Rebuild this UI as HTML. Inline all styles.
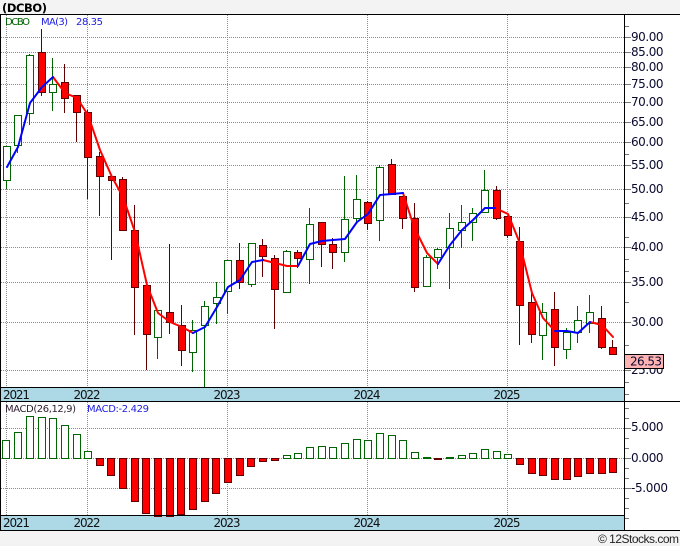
<!DOCTYPE html>
<html><head><meta charset="utf-8"><style>
html,body{margin:0;padding:0;background:#f3f3f3;width:680px;height:546px;overflow:hidden}
svg{display:block}
text{font-family:"DejaVu Sans",sans-serif}
</style></head><body>
<svg width="680" height="546" viewBox="0 0 680 546" xmlns="http://www.w3.org/2000/svg">
<rect width="680" height="546" fill="#f3f3f3"/>
<rect x="0" y="14" width="680" height="516" fill="#fff"/>
<rect x="1" y="387" width="624" height="14" fill="#add8e6"/>
<rect x="1" y="516" width="624" height="14" fill="#add8e6"/>

<g shape-rendering="crispEdges" fill="none">
<path stroke="#8c8c8c" stroke-dasharray="1 1" d="M1 37.5H625M1 52.5H625M1 67.5H625M1 84.5H625M1 102.5H625M1 122.5H625M1 142.5H625M1 165.5H625M1 189.5H625M1 217.5H625M1 247.5H625M1 282.5H625M1 322.5H625M1 370.5H625M1 428.5H625M1 458.5H625M1 488.5H625M6.5 15V387M87.5 15V387M227.5 15V387M367.5 15V387M507.5 15V387M6.5 402V516M87.5 402V516M227.5 402V516M367.5 402V516M507.5 402V516"/>
<path stroke="#777" d="M625 37.5H631M625 52.5H631M625 67.5H631M625 84.5H631M625 102.5H631M625 122.5H631M625 142.5H631M625 165.5H631M625 189.5H631M625 217.5H631M625 247.5H631M625 282.5H631M625 322.5H631M625 370.5H631M625 428.5H631M625 458.5H631M625 488.5H631"/>
<path stroke="#777" d="M625 26.5H629M625 154.5H629M625 203.5H629M625 237.5H629M625 259.5H629M625 271.5H629M625 302.5H629M625 345.5H629M625 382.5H629M625 394.5H629M625 408.5H629M625 418.5H629M625 438.5H629M625 448.5H629M625 468.5H629M625 478.5H629M625 498.5H629M625 508.5H629M625 518.5H629"/>

<path stroke="#006400" d="M6.5 146V189M17.5 115V153M29.5 54V125M52.5 58V111M157.5 310V359M192.5 320V372M204.5 301V387M216.5 282V324M227.5 260V314M251.5 243V287M286.5 250V292M309.5 208V284M344.5 176V262M356.5 175V223M379.5 165V241M426.5 255V286M437.5 248V269M449.5 213V289M461.5 205V248M472.5 208V241M484.5 170V212M542.5 303V360M566.5 328V359M577.5 306V343M589.5 295V333"/>
<path stroke="#600000" d="M41.5 29V96M64.5 64V113M76.5 95V142M87.5 110V199M99.5 152V216M111.5 176V260M122.5 177V230M134.5 205V335M146.5 285V370M169.5 244V334M181.5 305V366M239.5 243V289M262.5 239V277M274.5 255V329M297.5 250V268M321.5 222V267M332.5 238V269M367.5 201V230M391.5 159V194M402.5 196V229M414.5 203V292M496.5 186V220M507.5 216V238M519.5 227V345M531.5 290V343M554.5 292V366M601.5 306V349M612.5 340V354"/>

<g fill="#fff" stroke="#006400">
<rect x="3.5" y="146.5" width="7" height="34"/>
<rect x="14.5" y="115.5" width="7" height="30"/>
<rect x="26.5" y="55.5" width="7" height="58"/>
<rect x="49.5" y="84.5" width="7" height="8"/>
<rect x="154.5" y="310.5" width="7" height="27"/>
<rect x="189.5" y="330.5" width="7" height="22"/>
<rect x="201.5" y="306.5" width="7" height="19"/>
<rect x="213.5" y="297.5" width="7" height="6"/>
<rect x="224.5" y="260.5" width="7" height="31"/>
<rect x="248.5" y="243.5" width="7" height="41"/>
<rect x="283.5" y="251.5" width="7" height="41"/>
<rect x="306.5" y="224.5" width="7" height="35"/>
<rect x="341.5" y="219.5" width="7" height="33"/>
<rect x="353.5" y="199.5" width="7" height="19"/>
<rect x="376.5" y="167.5" width="7" height="53"/>
<rect x="423.5" y="257.5" width="7" height="29"/>
<rect x="434.5" y="249.5" width="7" height="8"/>
<rect x="446.5" y="228.5" width="7" height="19"/>
<rect x="458.5" y="222.5" width="7" height="8"/>
<rect x="469.5" y="213.5" width="7" height="9"/>
<rect x="481.5" y="190.5" width="7" height="22"/>
<rect x="539.5" y="312.5" width="7" height="23"/>
<rect x="563.5" y="332.5" width="7" height="17"/>
<rect x="574.5" y="320.5" width="7" height="12"/>
<rect x="586.5" y="312.5" width="7" height="11"/>
</g>
<g fill="#f00" stroke="#600000">
<rect x="38.5" y="52.5" width="7" height="40"/>
<rect x="61.5" y="82.5" width="7" height="16"/>
<rect x="73.5" y="95.5" width="7" height="17"/>
<rect x="84.5" y="112.5" width="7" height="45"/>
<rect x="96.5" y="156.5" width="7" height="20"/>
<rect x="108.5" y="176.5" width="7" height="4"/>
<rect x="119.5" y="179.5" width="7" height="51"/>
<rect x="131.5" y="230.5" width="7" height="57"/>
<rect x="143.5" y="285.5" width="7" height="49"/>
<rect x="166.5" y="312.5" width="7" height="10"/>
<rect x="178.5" y="325.5" width="7" height="25"/>
<rect x="236.5" y="260.5" width="7" height="22"/>
<rect x="259.5" y="245.5" width="7" height="11"/>
<rect x="271.5" y="258.5" width="7" height="31"/>
<rect x="294.5" y="252.5" width="7" height="6"/>
<rect x="318.5" y="222.5" width="7" height="22"/>
<rect x="329.5" y="244.5" width="7" height="8"/>
<rect x="364.5" y="202.5" width="7" height="21"/>
<rect x="388.5" y="164.5" width="7" height="30"/>
<rect x="399.5" y="196.5" width="7" height="22"/>
<rect x="411.5" y="218.5" width="7" height="69"/>
<rect x="493.5" y="190.5" width="7" height="28"/>
<rect x="504.5" y="216.5" width="7" height="19"/>
<rect x="516.5" y="241.5" width="7" height="64"/>
<rect x="528.5" y="302.5" width="7" height="32"/>
<rect x="551.5" y="309.5" width="7" height="38"/>
<rect x="598.5" y="318.5" width="7" height="29"/>
<rect x="609.5" y="347.5" width="7" height="7"/>
</g>

<g fill="#fff" stroke="#006400">
<rect x="2.5" y="440.5" width="7" height="18"/>
<rect x="14.5" y="432.5" width="7" height="26"/>
<rect x="26.5" y="416.5" width="7" height="42"/>
<rect x="38.5" y="417.5" width="7" height="41"/>
<rect x="49.5" y="418.5" width="7" height="40"/>
<rect x="61.5" y="425.5" width="7" height="33"/>
<rect x="73.5" y="434.5" width="7" height="24"/>
<rect x="84.5" y="451.5" width="7" height="7"/>
<rect x="283.5" y="455.5" width="7" height="3"/>
<rect x="294.5" y="453.5" width="7" height="5"/>
<rect x="306.5" y="447.5" width="7" height="11"/>
<rect x="318.5" y="446.5" width="7" height="12"/>
<rect x="329.5" y="447.5" width="7" height="11"/>
<rect x="341.5" y="443.5" width="7" height="15"/>
<rect x="353.5" y="439.5" width="7" height="19"/>
<rect x="364.5" y="440.5" width="7" height="18"/>
<rect x="376.5" y="433.5" width="7" height="25"/>
<rect x="388.5" y="435.5" width="7" height="23"/>
<rect x="399.5" y="440.5" width="7" height="18"/>
<rect x="411.5" y="452.5" width="7" height="6"/>
<rect x="423.5" y="457.5" width="7" height="1"/>
<rect x="446.5" y="457.5" width="7" height="1"/>
<rect x="458.5" y="455.5" width="7" height="3"/>
<rect x="469.5" y="453.5" width="7" height="5"/>
<rect x="481.5" y="449.5" width="7" height="9"/>
<rect x="493.5" y="451.5" width="7" height="7"/>
<rect x="504.5" y="454.5" width="7" height="4"/>
</g>
<g fill="#f00" stroke="#600000">
<rect x="96.5" y="458.5" width="7" height="7"/>
<rect x="107.5" y="458.5" width="7" height="17"/>
<rect x="119.5" y="458.5" width="7" height="30"/>
<rect x="131.5" y="458.5" width="7" height="43"/>
<rect x="142.5" y="458.5" width="7" height="55"/>
<rect x="154.5" y="458.5" width="7" height="58"/>
<rect x="166.5" y="458.5" width="7" height="58"/>
<rect x="177.5" y="458.5" width="7" height="56"/>
<rect x="189.5" y="458.5" width="7" height="51"/>
<rect x="201.5" y="458.5" width="7" height="43"/>
<rect x="212.5" y="458.5" width="7" height="35"/>
<rect x="224.5" y="458.5" width="7" height="24"/>
<rect x="236.5" y="458.5" width="7" height="17"/>
<rect x="247.5" y="458.5" width="7" height="8"/>
<rect x="259.5" y="458.5" width="7" height="3"/>
<rect x="271.5" y="458.5" width="7" height="2"/>
<rect x="434.5" y="458.5" width="7" height="1"/>
<rect x="516.5" y="458.5" width="7" height="6"/>
<rect x="528.5" y="458.5" width="7" height="15"/>
<rect x="539.5" y="458.5" width="7" height="17"/>
<rect x="551.5" y="458.5" width="7" height="21"/>
<rect x="563.5" y="458.5" width="7" height="21"/>
<rect x="574.5" y="458.5" width="7" height="18"/>
<rect x="586.5" y="458.5" width="7" height="15"/>
<rect x="598.5" y="458.5" width="7" height="15"/>
<rect x="609.5" y="458.5" width="7" height="14"/>
</g>
</g>

<g fill="none" stroke-width="2" stroke-linejoin="round" stroke-linecap="round">
<path stroke="#f00" d="M53 77L65 93L77 98L88 115L100 150L112 177L123 197L135 232L147 285L158 313L170 322L182 327L193 333M263 260L275 263L287 266L298 266M403 193L414 227L427 253L438 264M495 208L508 214L519 241L532 293L543 318L555 331M590 322L602 325L613 337"/>
<path stroke="#00f" d="M7 167L18 147L30 103L42 87L53 77M193 333L205 327L217 307L228 287L240 280L252 262L263 260M298 266L310 244L322 241L333 240L345 239L357 222L368 214L380 195L392 194L403 193M438 264L450 245L462 230L473 220L485 208L495 208M555 331L567 331L578 333L590 322"/>
</g>

<g shape-rendering="crispEdges" fill="none" stroke="#000">
<path d="M0 14.5H680M0 387.5H625M0 401.5H680M0 515.5H625M0 530.5H680M0.5 14V531M624.5 14V531"/>
</g>

<text x="2" y="12" font-weight="bold" font-size="11.5" textLength="45" fill="#000">(DCBO)</text>
<text x="5" y="25" font-size="10" textLength="25" fill="#006400">DCBO</text>
<text x="41" y="25" font-size="10" textLength="27" fill="#2020e0">MA(3)</text>
<text x="76" y="25" font-size="10" textLength="27" fill="#2020e0">28.35</text>
<text x="5" y="412" font-size="10" textLength="71" fill="#302030">MACD(26,12,9)</text>
<text x="87" y="412" font-size="10" textLength="62" fill="#2020e0">MACD:-2.429</text>

<g font-size="12" fill="#0a0a30">
<text x="631" y="41" textLength="32.5">90.00</text>
<text x="631" y="56" textLength="32.5">85.00</text>
<text x="631" y="71" textLength="32.5">80.00</text>
<text x="631" y="88" textLength="32.5">75.00</text>
<text x="631" y="106" textLength="32.5">70.00</text>
<text x="631" y="126" textLength="32.5">65.00</text>
<text x="631" y="146" textLength="32.5">60.00</text>
<text x="631" y="169" textLength="32.5">55.00</text>
<text x="631" y="193" textLength="32.5">50.00</text>
<text x="631" y="221" textLength="32.5">45.00</text>
<text x="631" y="251" textLength="32.5">40.00</text>
<text x="631" y="286" textLength="32.5">35.00</text>
<text x="631" y="326" textLength="32.5">30.00</text>
<text x="631" y="374" textLength="32.5">25.00</text>
<text x="631" y="431" textLength="32.5">5.000</text>
<text x="631" y="462" textLength="32.5">0.000</text>
<text x="631" y="492" textLength="37">-5.000</text>
</g>
<g shape-rendering="crispEdges"><rect x="624.5" y="354.5" width="39" height="14" fill="#ffb4b4" stroke="#000"/></g>
<text x="630" y="365.5" font-size="12" textLength="32" fill="#0a0a30">26.53</text>

<g font-size="12" fill="#111">
<text x="3" y="399" textLength="27">2021</text>
<text x="73.5" y="399" textLength="27">2022</text>
<text x="213.5" y="399" textLength="27">2023</text>
<text x="353.5" y="399" textLength="27">2024</text>
<text x="493.5" y="399" textLength="27">2025</text>
<text x="3" y="527" textLength="27">2021</text>
<text x="73.5" y="527" textLength="27">2022</text>
<text x="213.5" y="527" textLength="27">2023</text>
<text x="353.5" y="527" textLength="27">2024</text>
<text x="493.5" y="527" textLength="27">2025</text>
</g>
<text x="598" y="543" font-size="12" textLength="81" style="font-family:'Liberation Sans',sans-serif" fill="#222">© 12Stocks.com</text>
</svg>
</body></html>
